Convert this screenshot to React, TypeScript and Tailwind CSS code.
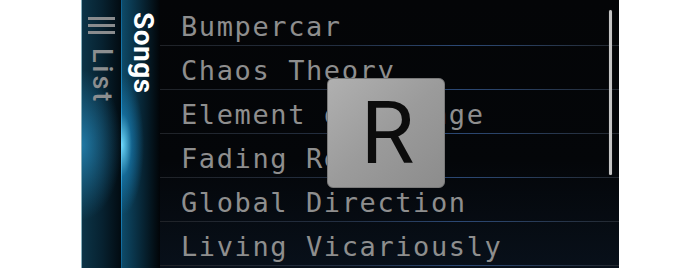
import React from "react";

const songs = [
  "Bumpercar",
  "Chaos Theory",
  "Element of Change",
  "Fading Reality",
  "Global Direction",
  "Living Vicariously",
];

export default function App() {
  return (
    <div className="w-[700px] h-[268px] bg-white flex pl-[81px] overflow-hidden">
      <div className="relative w-[538px] h-full flex border-l border-[#86aebb] bg-[linear-gradient(to_bottom,#040507,#040609_60%,#08101a)]">
        {/* List column */}
        <div className="w-[39px] h-full flex flex-col items-center pt-[17px] bg-[radial-gradient(ellipse_40px_75px_at_0px_145px,rgba(45,165,225,0.6),transparent),linear-gradient(to_right,#0c3447,#072231_50%,#020b11)]">
          <div className="flex flex-col gap-[4px] w-[27px]">
            <div className="h-[3px] bg-[#8a8c8e]" />
            <div className="h-[3px] bg-[#8a8c8e]" />
            <div className="h-[3px] bg-[#8a8c8e]" />
          </div>
          <div
            className="mt-[14px] [writing-mode:vertical-rl] text-[27px] leading-none tracking-[3px] font-medium text-[#8c8e90]"
            style={{ fontFamily: "Roboto, 'Noto Sans', sans-serif" }}
          >
            List
          </div>
        </div>
        {/* divider */}
        <div className="w-[1px] h-full bg-[linear-gradient(to_bottom,#0e5f8e,#1d8cc8_40%,#6fd6ff_54%,#1d8cc8_70%,#0e5f8e)]" />
        {/* Songs column */}
        <div className="w-[38px] h-full flex flex-col items-center pt-[12px] pl-[3px] bg-[radial-gradient(ellipse_22px_70px_at_0px_145px,rgba(110,220,255,0.95),rgba(30,150,215,0.45)_45%,transparent),linear-gradient(to_right,#0e4a68,#082b3d_45%,#010407)]">
          <div
            className="[writing-mode:vertical-rl] text-[28px] leading-none font-bold text-white tracking-[0.5px]"
            style={{ fontFamily: "Roboto, 'Noto Sans', sans-serif" }}
          >
            Songs
          </div>
        </div>
        {/* song list */}
        <div className="flex-1 h-full flex flex-col pt-[2px]">
          {songs.map((s) => (
            <div key={s} className="h-[44px] flex flex-col shrink-0">
              <div
                className="flex-1 pl-[21px] pt-[11px] text-[27px] leading-none tracking-[1.6px] text-[#8e8e8e] whitespace-nowrap"
                style={{ fontFamily: "'DejaVu Sans Mono', 'Liberation Mono', monospace" }}
              >
                {s}
              </div>
              <div className="h-px bg-[linear-gradient(to_right,#202328,#232f42_40%,#2b4874_65%,#2a4266_75%,#23282f)]" />
            </div>
          ))}
        </div>
        {/* scrollbar */}
        <div className="absolute left-[527px] top-[10px] w-[3px] h-[165px] rounded-full bg-[#c4c4c4] shadow-[0_0_1px_#666]" />
        {/* fast scroll letter */}
        <div className="absolute left-[245px] top-[78px] w-[118px] h-[110px] rounded-[6px] flex items-center justify-center bg-[linear-gradient(to_bottom_right,#b0b0b0,#9b9b9b_50%,#8c8c8c)] border border-[#7a7a7a]">
          <span
            className="text-[87px] leading-none text-[#0c0c0c] ml-[3px]"
            style={{ fontFamily: "Roboto, 'Noto Sans', sans-serif" }}
          >
            R
          </span>
        </div>
      </div>
    </div>
  );
}
